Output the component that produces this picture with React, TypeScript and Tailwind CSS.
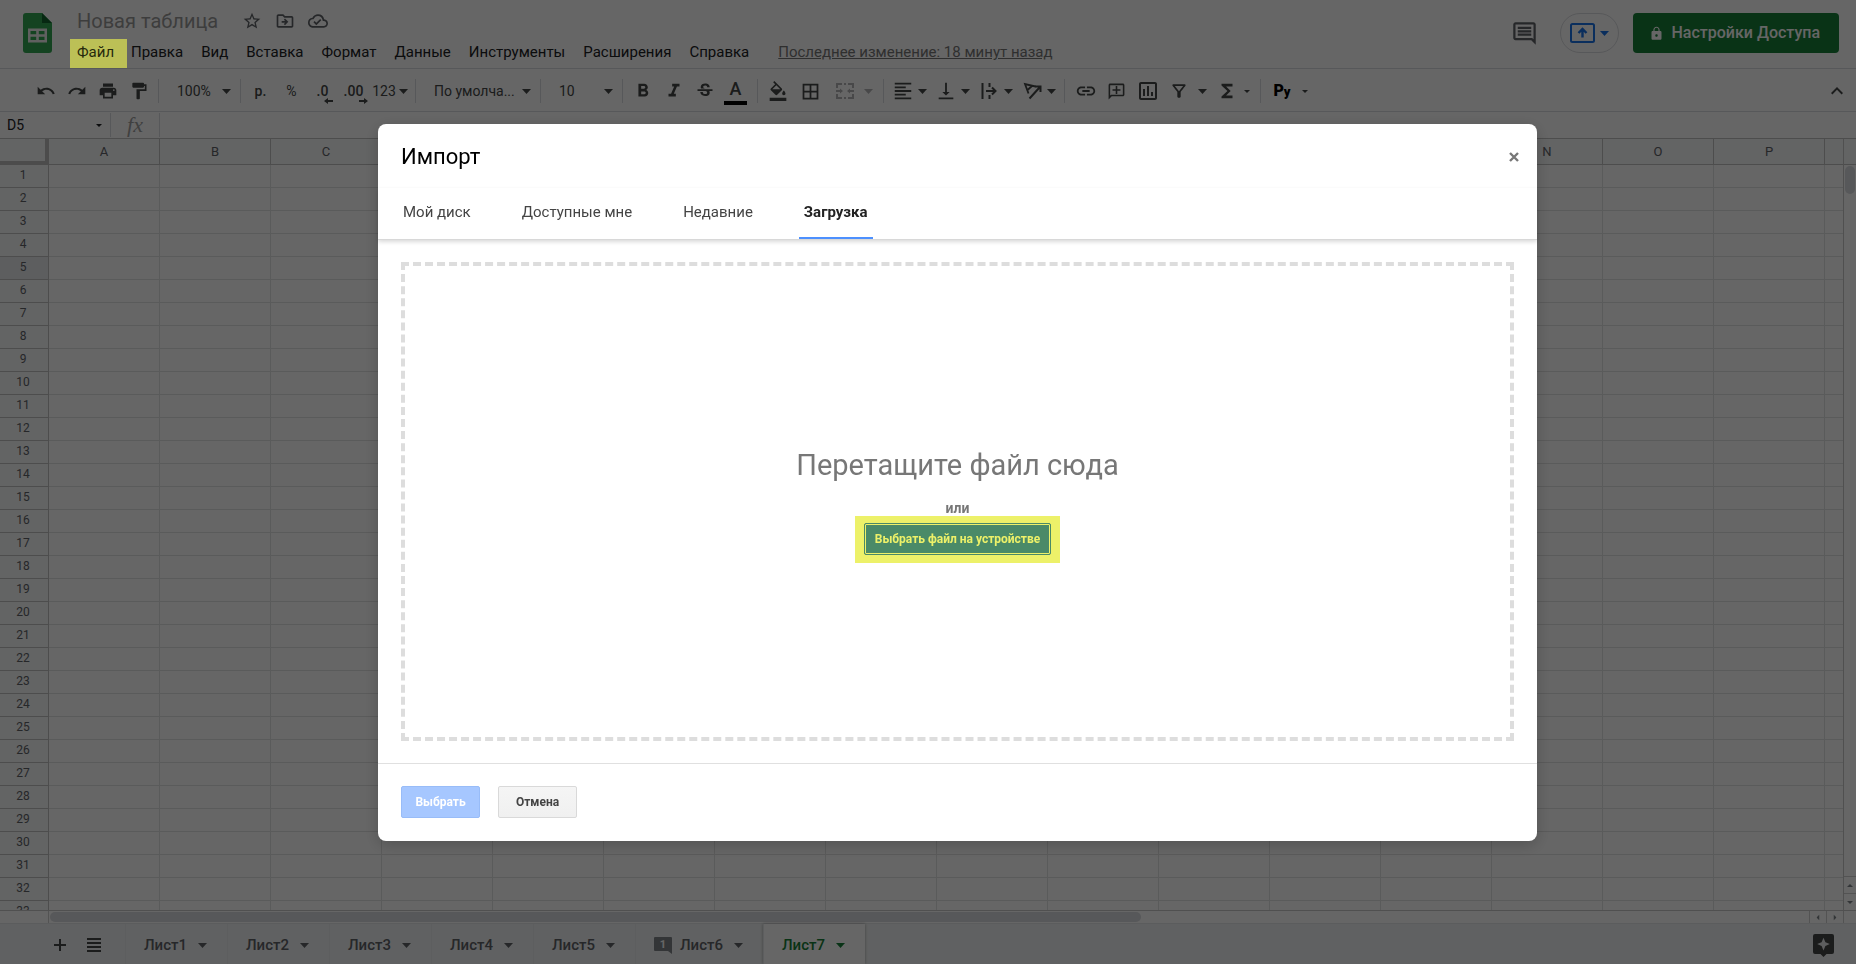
import type { ReactNode } from 'react';
import {
  MdBorderAll,
  MdFormatAlignLeft,
  MdFormatBold,
  MdFormatColorFill,
  MdFormatItalic,
  MdFormatPaint,
  MdFunctions,
  MdKeyboardArrowUp,
  MdLink,
  MdLock,
  MdOutlineAddComment,
  MdOutlineCloudDone,
  MdOutlineComment,
  MdOutlineDriveFileMove,
  MdOutlineFilterAlt,
  MdOutlineInsertChart,
  MdPrint,
  MdRedo,
  MdStarBorder,
  MdStrikethroughS,
  MdUndo,
  MdVerticalAlignBottom,
} from 'react-icons/md';

const MENUS = ['Правка', 'Вид', 'Вставка', 'Формат', 'Данные', 'Инструменты', 'Расширения', 'Справка'];
const COLUMNS = 'ABCDEFGHIJKLMNOP'.split('');
const ROWS = Array.from({ length: 33 }, (_, i) => i + 1);
const SHEETS = [1, 2, 3, 4, 5, 6, 7];
const ACTIVE_SHEET = 7;
const DIALOG_TABS = ['Мой диск', 'Доступные мне', 'Недавние', 'Загрузка'];
const ACTIVE_TAB = 'Загрузка';

function SheetsLogo() {
  return (
    <svg width="29" height="40" viewBox="0 0 29 40" aria-hidden="true">
      <path d="M3 0h16l10 10v27a3 3 0 0 1-3 3H3a3 3 0 0 1-3-3V3a3 3 0 0 1 3-3z" fill="#34a853" />
      <path d="M19 0l10 10H19z" fill="#13652f" />
      <path
        d="M5 15.500h19v14H5zM7.500 18v3.300h5.700V18zM15.800 18v3.300h5.700V18zM7.500 23.700V27h5.700v-3.300zM15.800 23.700V27h5.700v-3.300z"
        fill="#f1f1f1"
        fillRule="evenodd"
      />
    </svg>
  );
}

function MergeIcon() {
  return (
    <svg width="20" height="20" viewBox="0 0 20 20" fill="none" stroke="currentColor" strokeWidth="2" aria-hidden="true">
      <path d="M2 7V3h5M9 3h2M13 3h5v4M2 13v4h5M9 17h2M13 17h5v-4M1 10h5M19 10h-5" />
      <path d="M5 7.500L8 10l-3 2.500zM15 7.500L12 10l3 2.500z" fill="currentColor" stroke="none" />
    </svg>
  );
}

function OverflowIcon() {
  return (
    <svg width="16" height="18" viewBox="0 0 16 18" fill="none" stroke="currentColor" strokeWidth="2" aria-hidden="true">
      <path d="M1.500 1v16M8.500 1v4M8.500 13v4M5 9h9M11 5.500L14.500 9 11 12.500" />
    </svg>
  );
}

function RotateIcon() {
  return (
    <svg width="19" height="18" viewBox="0 0 19 18" fill="none" stroke="currentColor" strokeWidth="2" aria-hidden="true">
      <path d="M6.500 16.500L16.500 5.500M12 4.500h5.500V10" />
      <path d="M12.500 4.500L2 2l3.500 9.500M9 4L4.500 8" strokeWidth="1.800" />
    </svg>
  );
}

function PresentIcon() {
  return (
    <svg width="25" height="20" viewBox="0 0 25 20" fill="none" stroke="currentColor" strokeWidth="2" aria-hidden="true">
      <rect x="1" y="1" width="23" height="18" rx="1.500" />
      <path d="M12.500 14.500V7M8.500 10l4-4 4 4" strokeWidth="2.400" />
    </svg>
  );
}

function ExploreIcon() {
  return (
    <svg width="21" height="23" viewBox="0 0 21 23" aria-hidden="true">
      <path d="M2 0h17a2 2 0 0 1 2 2v16a2 2 0 0 1-2 2h-5.500l-3 3-3-3H2a2 2 0 0 1-2-2V2a2 2 0 0 1 2-2z" fill="currentColor" />
      <path d="M10.500 3.800l1.900 4.400 4.400 1.900-4.400 1.900-1.900 4.400-1.900-4.400-4.400-1.900 4.400-1.900z" fill="#e8eaed" />
    </svg>
  );
}

function Caret({ small = false }: { small?: boolean }) {
  return small ? (
    <svg width="6" height="3" viewBox="0 0 6 3" aria-hidden="true">
      <path d="M0 0h6L3 3z" fill="currentColor" />
    </svg>
  ) : (
    <svg width="9" height="5" viewBox="0 0 9 5" aria-hidden="true">
      <path d="M0 0h9L4.500 5z" fill="currentColor" />
    </svg>
  );
}

function Tool({ label, className = 'w-[31px]', children }: { label: string; className?: string; children: ReactNode }) {
  return (
    <button type="button" aria-label={label} className={`flex h-8 shrink-0 items-center justify-center ${className}`}>
      {children}
    </button>
  );
}

// icon followed by its own drop-down arrow
function MenuTool({ label, children }: { label: string; children: ReactNode }) {
  return (
    <button type="button" aria-label={label} className="flex h-8 shrink-0 items-center pr-[5px]">
      <span className="flex w-6 justify-center">{children}</span>
      <span className="flex w-[14px] justify-center">
        <Caret />
      </span>
    </button>
  );
}

function Picker({ label, value, className }: { label: string; value: string; className: string }) {
  return (
    <div className={`relative flex h-8 shrink-0 items-center ${className}`}>
      <select aria-label={label} className="w-full appearance-none bg-transparent pl-[18px] text-[14px] focus:outline-none">
        <option>{value}</option>
      </select>
      <span className="pointer-events-none absolute right-[9px]">
        <Caret />
      </span>
    </div>
  );
}

function Divider({ className = '' }: { className?: string }) {
  return <span className={`h-6 w-px shrink-0 bg-[#dadce0] ${className}`} />;
}

function DecimalTool({ label, text, more = false }: { label: string; text: string; more?: boolean }) {
  return (
    <Tool label={label}>
      <span className="relative text-[14px] font-medium leading-5">
        {text}
        <svg
          className={`absolute -right-[5px] top-[17px] ${more ? 'rotate-180' : ''}`}
          width="9"
          height="6"
          viewBox="0 0 9 6"
          aria-hidden="true"
        >
          <path d="M4 0v2h5v2H4v2L0 3z" fill="currentColor" />
        </svg>
      </span>
    </Tool>
  );
}

function Header() {
  return (
    <header className="flex h-[69px] shrink-0 items-start border-b border-[#dadce0]">
      <div className="ml-[23px] mt-[13px]">
        <SheetsLogo />
      </div>
      <div className="ml-[18px] flex flex-col">
        <div className="flex h-[39px] items-center pl-[7px] pt-[3px] text-[#5f6368]">
          <h1 className="text-[20px] text-[#9a9a9a]">Новая таблица</h1>
          <div className="ml-6 flex gap-[13px]">
            <button type="button" aria-label="Добавить в избранное">
              <MdStarBorder size={20} />
            </button>
            <button type="button" aria-label="Переместить">
              <MdOutlineDriveFileMove size={20} />
            </button>
            <button type="button" aria-label="Статус документа">
              <MdOutlineCloudDone size={20} />
            </button>
          </div>
        </div>
        <nav className="flex text-[15px] leading-[26px] text-[#202124]">
          <button type="button" className="relative z-30 mr-[-5px] h-[29px] w-[57px] bg-[#bcc056] pb-[3px] pl-[7px] text-left text-[#26290c]">
            Файл
          </button>
          {MENUS.map((name) => (
            <button key={name} type="button" className="h-[26px] px-[9px]">
              {name}
            </button>
          ))}
          <a href="#history" className="ml-5 text-[#777] underline">
            Последнее изменение: 18 минут назад
          </a>
        </nav>
      </div>
      <div className="ml-auto mr-[17px] mt-[13px] flex h-10 items-center">
        <button type="button" aria-label="Комментарии" className="mr-[22px] text-[#5f6368]">
          <MdOutlineComment size={27} />
        </button>
        <button
          type="button"
          aria-label="Начать презентацию"
          className="mr-[14px] flex h-10 w-[59px] items-center justify-center gap-[5px] rounded-full border border-[#dadce0] text-[#1a73e8]"
        >
          <PresentIcon />
          <Caret />
        </button>
        <button
          type="button"
          className="flex h-10 items-center gap-2 rounded bg-[#188038] pl-4 pr-[19px] text-[16px] font-medium text-white"
        >
          <MdLock size={15} />
          Настройки Доступа
        </button>
      </div>
    </header>
  );
}

function Toolbar() {
  return (
    <div className="flex h-[43px] shrink-0 items-center border-b border-[#dadce0] pl-[30px] pr-1 pt-[2px] text-[14px] text-[#444746]">
      <Tool label="Отменить"><MdUndo size={20} /></Tool>
      <Tool label="Повторить"><MdRedo size={20} /></Tool>
      <Tool label="Печать"><MdPrint size={20} /></Tool>
      <Tool label="Копировать форматирование"><MdFormatPaint size={20} /></Tool>
      <Divider className="ml-1" />
      <Picker label="Масштаб" value="100%" className="w-[81px]" />
      <Divider className="mr-1" />
      <Tool label="Денежный формат"><span className="font-medium">р.</span></Tool>
      <Tool label="Процентный формат">%</Tool>
      <DecimalTool label="Меньше знаков" text=".0" />
      <DecimalTool label="Больше знаков" text=".00" more />
      <Tool label="Другие форматы" className="w-[42px] gap-[3px]">
        123
        <Caret />
      </Tool>
      <Divider className="ml-1" />
      <Picker label="Шрифт" value="По умолча..." className="w-[124px]" />
      <Divider />
      <Picker label="Размер шрифта" value="10" className="w-[81px]" />
      <Divider className="mr-1" />
      <Tool label="Полужирный"><MdFormatBold size={22} /></Tool>
      <Tool label="Курсив"><MdFormatItalic size={22} /></Tool>
      <Tool label="Зачеркнутый"><MdStrikethroughS size={20} /></Tool>
      <Tool label="Цвет текста">
        <span className="flex h-7 w-[23px] items-start justify-center border-b-4 border-black text-[18px] font-medium leading-6">
          A
        </span>
      </Tool>
      <Divider className="ml-[6px] mr-1" />
      <Tool label="Цвет заливки"><MdFormatColorFill size={20} /></Tool>
      <Tool label="Границы" className="w-[35px]"><MdBorderAll size={21} /></Tool>
      <Tool label="Объединить ячейки" className="w-[33px] text-[#b4b5b6]"><MergeIcon /></Tool>
      <Tool label="Тип объединения" className="w-[15px] text-[#b4b5b6]"><Caret /></Tool>
      <Divider className="mx-[7px]" />
      <MenuTool label="Выравнивание по горизонтали"><MdFormatAlignLeft size={22} /></MenuTool>
      <MenuTool label="Выравнивание по вертикали"><MdVerticalAlignBottom size={22} /></MenuTool>
      <MenuTool label="Перенос текста"><OverflowIcon /></MenuTool>
      <MenuTool label="Поворот текста"><RotateIcon /></MenuTool>
      <Divider className="ml-px mr-[5px]" />
      <Tool label="Вставить ссылку"><MdLink size={22} /></Tool>
      <Tool label="Добавить комментарий"><MdOutlineAddComment size={19} className="-scale-x-100" /></Tool>
      <Tool label="Вставить диаграмму"><MdOutlineInsertChart size={24} /></Tool>
      <Tool label="Создать фильтр"><MdOutlineFilterAlt size={20} /></Tool>
      <Tool label="Фильтры" className="w-4"><Caret /></Tool>
      <Tool label="Функции" className="w-[33px]"><MdFunctions size={22} /></Tool>
      <Tool label="Список функций" className="w-2"><Caret small /></Tool>
      <Divider className="ml-[9px] mr-1" />
      <Tool label="Способ ввода" className="w-[34px] text-black">
        <span className="text-[16px] font-black leading-5">
          P<span className="text-[13px]">y</span>
        </span>
      </Tool>
      <Tool label="Список способов ввода" className="w-3"><Caret small /></Tool>
      <Tool label="Скрыть меню" className="ml-auto w-[31px]"><MdKeyboardArrowUp size={24} /></Tool>
    </div>
  );
}

function FormulaBar() {
  return (
    <div className="flex h-[27px] shrink-0 items-center border-b border-[#c0c0c0] text-[14px]">
      <button type="button" className="flex h-full w-[110px] items-center justify-between pl-[7px] pr-2 text-[#202124]">
        D5
        <Caret small />
      </button>
      <Divider />
      <label htmlFor="formula" className="w-12 text-center font-['Liberation_Serif',serif] text-[22px] leading-6 italic text-[#a0a0a0]">
        fx
      </label>
      <Divider />
      <input id="formula" type="text" className="h-full min-w-0 flex-1 bg-transparent px-2 focus:outline-none" />
    </div>
  );
}

function Grid() {
  return (
    <div className="flex min-h-0 flex-1">
      <div className="min-w-0 flex-1 overflow-hidden border-b border-r border-[#c8c8c8]">
        <table className="w-max table-fixed border-separate border-spacing-0 text-[13px] text-[#5f6368]">
          <thead>
            <tr className="h-[26px] bg-[#f8f9fa]">
              <th className="w-[49px] border-b-4 border-r-4 border-[#bdbdbd] p-0" />
              {COLUMNS.map((name) => (
                <th key={name} className="w-[111px] border-b border-r border-[#c0c0c0] p-0 font-normal">
                  {name}
                </th>
              ))}
              <th className="w-[111px] border-b border-r border-[#c0c0c0] p-0" />
            </tr>
          </thead>
          <tbody>
            {ROWS.map((row) => (
              <tr key={row} className="h-[23px]">
                <th
                  className={`border-b border-r border-[#c0c0c0] p-0 pr-[2px] align-top text-[12px] font-normal leading-[21px] ${
                    row === 5 ? 'bg-[#e8eaed]' : 'bg-[#f8f9fa]'
                  }`}
                >
                  {row}
                </th>
                {COLUMNS.map((name) => (
                  <td key={name} className="border-b border-r border-[#e2e3e3] p-0" />
                ))}
                <td className="border-b border-r border-[#e2e3e3] p-0" />
              </tr>
            ))}
          </tbody>
        </table>
      </div>
      <div className="flex w-3 shrink-0 flex-col border-b border-[#c8c8c8] text-[#80868b]">
        <div className="h-[26px] border-b border-[#c0c0c0] bg-[#f8f9fa]" />
        <div className="mx-px mt-px h-7 rounded-full bg-[#dadce0]" />
        <div className="mt-auto flex h-[17px] items-center justify-center border-t border-[#d0d0d0]">
          <span className="rotate-180"><Caret small /></span>
        </div>
        <div className="flex h-[17px] items-center justify-center border-t border-[#d0d0d0]">
          <Caret small />
        </div>
      </div>
    </div>
  );
}

function HorizontalScroll() {
  return (
    <div className="flex h-3 shrink-0 text-[#80868b]">
      <div className="w-[49px] shrink-0 border-r border-[#d0d0d0]" />
      <div className="flex-1 py-px pl-px">
        <div className="h-full w-[62%] rounded-full bg-[#dadce0]" />
      </div>
      <div className="flex w-[17px] items-center justify-center border-l border-[#d0d0d0]">
        <span className="rotate-90"><Caret small /></span>
      </div>
      <div className="flex w-[18px] items-center justify-center border-x border-[#d0d0d0]">
        <span className="-rotate-90"><Caret small /></span>
      </div>
      <div className="w-3" />
    </div>
  );
}

function SheetTabs() {
  return (
    <footer className="flex h-[41px] shrink-0 items-stretch border-t border-[#e4e6e8] bg-[#f1f3f4] text-[#5f6368]">
      <div className="flex w-[125px] items-center pl-[51px] pt-px">
        <button type="button" aria-label="Добавить лист" className="w-[18px]">
          <svg width="18" height="18" viewBox="0 0 18 18" stroke="#444746" strokeWidth="2" aria-hidden="true">
            <path d="M9 3v12M3 9h12" />
          </svg>
        </button>
        <button type="button" aria-label="Все листы" className="ml-[18px]">
          <svg width="14" height="14" viewBox="0 0 14 14" stroke="#444746" strokeWidth="2" aria-hidden="true">
            <path d="M0 1h14M0 5h14M0 9h14M0 13h14" />
          </svg>
        </button>
      </div>
      {SHEETS.map((n) => (
        <button
          key={n}
          type="button"
          className={`flex items-center border-l border-[#e8eaed] pl-[18px] pr-5 pt-[2px] text-[15px] font-medium ${
            n === ACTIVE_SHEET ? 'bg-white text-[#188038] shadow-[0_0_3px_#00000055]' : ''
          }`}
        >
          {n === 6 && (
            <svg width="18" height="17" viewBox="0 0 18 17" className="mr-2" aria-hidden="true">
              <path d="M1 0h16a1 1 0 0 1 1 1v16l-4-3H1a1 1 0 0 1-1-1V1a1 1 0 0 1 1-1z" fill="#80868b" />
              <text x="9" y="11" textAnchor="middle" fontSize="11" fontWeight="700" fill="#fff">1</text>
            </svg>
          )}
          Лист{n}
          <span className="ml-[11px]"><Caret /></span>
        </button>
      ))}
      <button type="button" aria-label="Анализ данных" className="ml-auto mr-[22px] pt-[3px] text-[#444746]">
        <ExploreIcon />
      </button>
    </footer>
  );
}

function ImportDialog() {
  return (
    <div
      role="dialog"
      aria-modal="true"
      aria-labelledby="import-title"
      className="flex h-full w-full flex-col rounded-lg bg-white shadow-[0_4px_16px_rgba(0,0,0,0.2)]"
    >
      <div className="flex h-16 shrink-0 items-center justify-between pl-[23px] pr-[17px] pt-px">
        <h2 id="import-title" className="text-[22px] text-black">Импорт</h2>
        <button type="button" aria-label="Закрыть" className="flex size-3 items-center justify-center">
          <svg width="10" height="10" viewBox="0 0 10 10" stroke="#777" strokeWidth="2.400" aria-hidden="true">
            <path d="M1 1l8 8M9 1L1 9" />
          </svg>
        </button>
      </div>
      <div role="tablist" className="flex h-[52px] shrink-0 gap-[41px] border-b border-[#d8d8d8] pl-5 shadow-[0_2px_4px_rgba(0,0,0,0.15)]">
        {DIALOG_TABS.map((name) => (
          <button
            key={name}
            type="button"
            role="tab"
            aria-selected={name === ACTIVE_TAB}
            className={`border-b-2 px-[5px] text-[15px] ${
              name === ACTIVE_TAB ? 'border-[#4d90fe] font-bold text-[#222]' : 'border-transparent text-[#444]'
            }`}
          >
            {name}
          </button>
        ))}
      </div>
      <div className="flex flex-1 px-[23px] py-[22px]">
        <div className="flex flex-1 flex-col items-center justify-center border-4 border-dashed border-[#ddd] text-[#777]">
          <p className="text-[29px] leading-[50px]">Перетащите файл сюда</p>
          <p className="mt-[11px] text-[14px] font-bold leading-[15px]">или</p>
          <div className="bg-[#edf169] px-[9px] pb-2 pt-[7px]">
            <button
              type="button"
              className="block h-8 rounded-[2px] border border-[#4a8a68] bg-[#4a8a68] px-[10px] text-[12px] font-bold text-[#edf169] shadow-[inset_0_0_0_1px_#edf169]"
            >
              Выбрать файл на устройстве
            </button>
          </div>
        </div>
      </div>
      <div className="flex h-[78px] shrink-0 items-center gap-[18px] border-t border-[#e0e0e0] px-[23px] pb-[2px] text-[12px] font-bold">
        <button type="button" disabled className="h-8 w-[79px] rounded-[2px] border border-[#98bcf8] bg-[#a6c7ff] text-white">
          Выбрать
        </button>
        <button
          type="button"
          className="h-8 w-[79px] rounded-[2px] border border-[#d9d9d9] bg-gradient-to-b from-[#f5f5f5] to-[#f0f0f0] text-[#444]"
        >
          Отмена
        </button>
      </div>
    </div>
  );
}

export default function App() {
  return (
    <div className="relative flex h-screen flex-col overflow-hidden bg-white font-[Roboto,sans-serif]">
      <Header />
      <Toolbar />
      <FormulaBar />
      <Grid />
      <HorizontalScroll />
      <SheetTabs />
      <div className="fixed inset-0 z-20 bg-black/60 pb-[123px] pl-[378px] pr-[319px] pt-[124px]">
        <ImportDialog />
      </div>
    </div>
  );
}
